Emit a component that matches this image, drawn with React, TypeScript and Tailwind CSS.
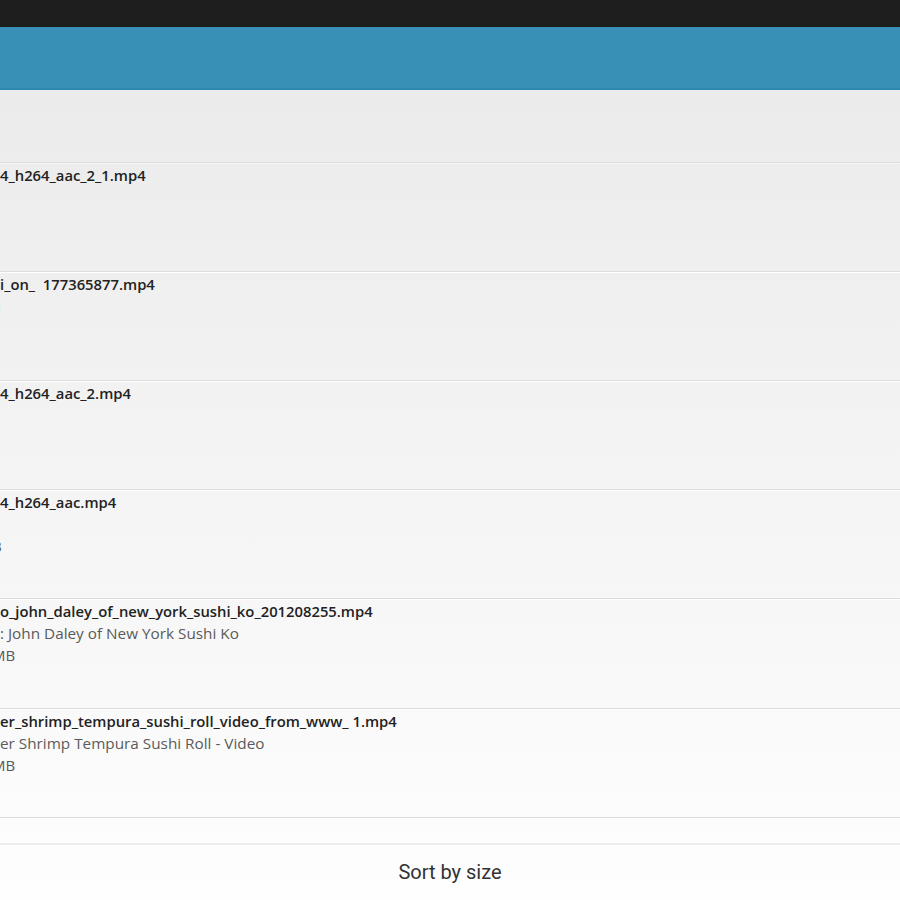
import React from "react";

type Row = {
  name: string;
  title?: string;
  size?: string;
  height: string;
};

const rows: Row[] = [
  { name: "4_h264_aac_2_1.mp4", height: "h-[109px]" },
  { name: "i_on_  177365877.mp4", title: "l", height: "h-[109px]" },
  { name: "4_h264_aac_2.mp4", height: "h-[109px]" },
  { name: "4_h264_aac.mp4", size: "B", height: "h-[109px]" },
  {
    name: "o_john_daley_of_new_york_sushi_ko_201208255.mp4",
    title: ": John Daley of New York Sushi Ko",
    size: "IB",
    height: "h-[110px]",
  },
  {
    name: "er_shrimp_tempura_sushi_roll_video_from_www_ 1.mp4",
    title: "er Shrimp Tempura Sushi Roll - Video",
    size: "IB",
    height: "h-[109px]",
  },
];

const FileRow = ({ row }: { row: Row }) => (
  <div className={`${row.height} shrink-0 overflow-hidden border-b border-[#dcdcdc] pt-[1px] font-['Open_Sans','Liberation_Sans',sans-serif] shadow-[0_1px_0_#ffffff]`}>
    <div className="h-[22px] whitespace-pre text-[14.8px] leading-[22px] font-semibold text-[#222222]">{row.name}</div>
    <div className="h-[22px] whitespace-nowrap text-[15.3px] leading-[22px] text-[#5a5a5a]">
      {row.title === "l" ? <span className="-ml-[3px] inline-block">l</span> : row.title}
    </div>
    <div className="h-[22px] whitespace-nowrap text-[15px] leading-[22px] text-[#5a5a5a]">
      {row.size ? <span className="-ml-[8px] inline-block">{row.size === "B" ? "B" : "MB"}</span> : null}
    </div>
  </div>
);

export default function App() {
  return (
    <div className="flex h-[900px] w-[900px] flex-col overflow-hidden bg-white font-['Roboto','Liberation_Sans',sans-serif]">
      <div className="h-[27px] shrink-0 bg-[#1e1e1e]" />
      <div className="h-[63px] shrink-0 border-b-[2px] border-[#2d87ae] bg-[#3990b6] shadow-[0_1px_2px_rgba(0,0,0,0.25)]" />
      <div className="flex flex-1 flex-col bg-gradient-to-b from-[#ebebeb] to-[#fefefe]">
        <div className="h-[73px] shrink-0 border-b border-[#dcdcdc] shadow-[0_1px_0_#f6f6f6]" />
        {rows.map((row, i) => (
          <FileRow key={i} row={row} />
        ))}
        <div className="h-[27px] shrink-0 border-b-[2px] border-[#ececec]" />
        <div className="flex flex-1 items-center justify-center pb-[1px] text-[20px] text-[#333333]">Sort by size</div>
      </div>
    </div>
  );
}
